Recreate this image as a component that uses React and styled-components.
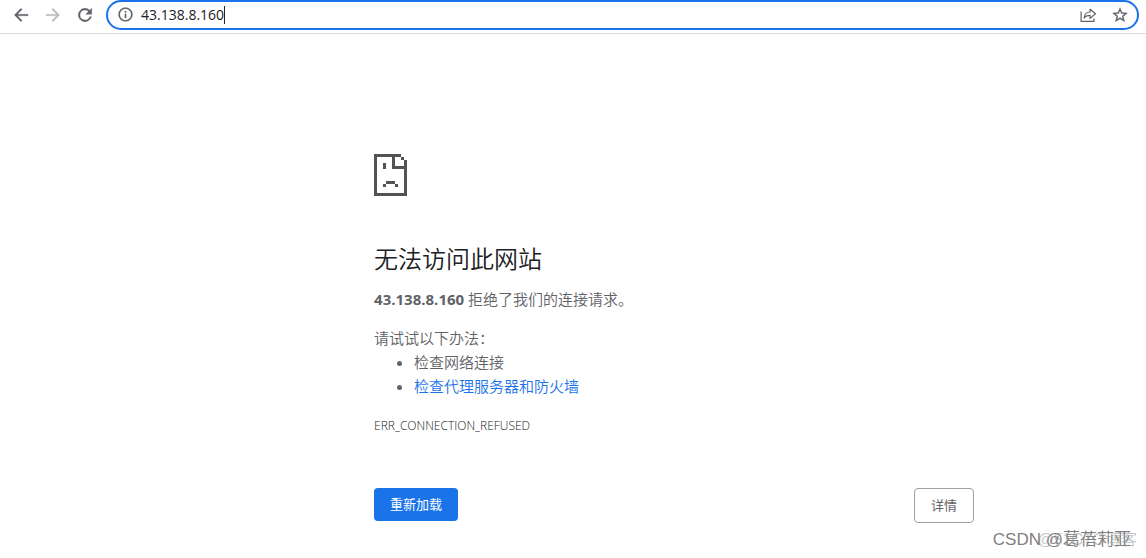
import React from 'react';
import styled, { createGlobalStyle } from 'styled-components';

const GlobalStyle = createGlobalStyle`
  * {
    box-sizing: border-box;
  }
  body {
    margin: 0;
    background: #fff;
    color: #5f6368;
    font-family: 'Open Sans', 'Noto Sans CJK SC', sans-serif;
    font-size: 15px;
    font-weight: 350;
    line-height: 24px;
  }
`
const Page = styled.div`
  position: relative;
  display: flex;
  flex-direction: column;
  min-height: 100vh;
`
const Toolbar = styled.header`
  display: flex;
  align-items: center;
  gap: 8px;
  height: 34px;
  padding: 0 7px 4px 9px;
  border-bottom: 1px solid #dadce0;
`
const IconButton = styled.button`
  display: flex;
  align-items: center;
  justify-content: center;
  width: 24px;
  height: 24px;
  padding: 0;
  border: 0;
  background: none;
  color: ${props => (props.disabled ? '#babcbe' : '#5f6368')};
`
const AddressBar = styled.div`
  display: flex;
  flex: 1;
  align-items: center;
  gap: 8px;
  height: 30px;
  margin-left: 1px;
  padding: 0 5px;
  border: 2px solid #1a73e8;
  border-radius: 15px;
`
const Field = styled.div`
  display: flex;
  flex: 1;
  align-items: center;
`
const AddressInput = styled.input`
  field-sizing: content;
  margin-left: 4px;
  padding: 0;
  border: 0;
  outline: 0;
  background: none;
  color: #202124;
  font-family: inherit;
  font-size: 14px;
  line-height: 20px;
`
const Caret = styled.span`
  width: 1px;
  height: 18px;
  background: #202124;
`
const Content = styled.main`
  width: 100%;
  max-width: 600px;
  margin: 0 15% 0 auto;
  padding-top: 120px;
`
const ErrorIcon = styled.svg`
  display: block;
  width: 33px;
  height: 42px;
  margin-bottom: 48px;
`
const Title = styled.h1`
  margin: 0 0 13px;
  color: #202124;
  font-size: 24px;
  font-weight: 350;
  line-height: 30px;
`
const Text = styled.p`
  margin: 0 0 ${props => (props.$tight ? '0' : '15px')};
`
const Host = styled.strong`
  font-weight: 700;
`
const Tips = styled.ul`
  margin: 0 0 16px;
  padding-left: 40px;
`
const Link = styled.a`
  color: #1a73e8;
  text-decoration: none;
`
const ErrorCode = styled.div`
  color: #202124;
  font-size: 12px;
  font-weight: 300;
`
const Actions = styled.div`
  display: flex;
  align-items: flex-start;
  justify-content: space-between;
  margin-top: 50px;
`
const Button = styled.button`
  padding: 0 16px;
  border: ${props => (props.$primary ? '0' : '1px solid #9aa0a6')};
  border-radius: 4px;
  background: ${props => (props.$primary ? '#1a73e8' : '#fff')};
  color: ${props => (props.$primary ? '#fff' : '#5f6368')};
  font-family: inherit;
  font-size: 13px;
  line-height: 33px;
`
const Watermark = styled.div`
  position: absolute;
  right: ${props => props.$right}px;
  bottom: 6px;
  color: ${props => props.$color};
  font-family: 'Liberation Sans', 'Noto Sans CJK SC', sans-serif;
  font-size: ${props => props.$size}px;
  white-space: nowrap;
`

function Icon({ children, size = 20 }) {
  return (
    <svg width={size} height={size} viewBox="0 0 24 24" fill="currentColor" aria-hidden="true">
      {children}
    </svg>
  )
}

function BrowserBar() {
  return (
    <Toolbar>
      <IconButton aria-label="后退">
        <Icon><path d="M20.5 11H7.8l5.6-5.6L12 4l-8 8 8 8 1.4-1.4L7.8 13h12.7z" stroke="currentColor" strokeWidth=".3" /></Icon>
      </IconButton>
      <IconButton aria-label="前进" disabled>
        <Icon><path d="M3.5 11h12.7l-5.6-5.6L12 4l8 8-8 8-1.4-1.4 5.6-5.6H3.5z" stroke="currentColor" strokeWidth=".3" /></Icon>
      </IconButton>
      <IconButton aria-label="重新加载">
        <Icon><path d="M17.65 6.35A8 8 0 1 0 19.73 14h-2.08A6 6 0 1 1 12 6c1.66 0 3.14.69 4.22 1.78L13 11h7V4z" stroke="currentColor" strokeWidth=".5" /></Icon>
      </IconButton>
      <AddressBar>
        <Field>
          <IconButton aria-label="网站信息">
            <Icon size={17}><path d="M11 7h2v2h-2zm0 4h2v6h-2zm1-9a10 10 0 1 0 0 20 10 10 0 0 0 0-20zm0 18a8 8 0 1 1 0-16 8 8 0 0 1 0 16z" stroke="currentColor" strokeWidth=".3" /></Icon>
          </IconButton>
          <AddressInput aria-label="地址栏" defaultValue="43.138.8.160" />
          <Caret />
        </Field>
        <IconButton aria-label="分享">
          <svg width="18" height="18" viewBox="0 0 18 18" fill="none" stroke="currentColor" strokeWidth="1.2" aria-hidden="true">
            <path d="M2.1 5.5v9.9h12.8v-3" />
            <path d="M5.1 12c.5-4 2.6-6 6-6V3.2l5.4 4.6-5.4 4.6V9.4c-2.6 0-4.4.6-6 2.6z" strokeLinejoin="round" />
          </svg>
        </IconButton>
        <IconButton aria-label="为此标签页添加书签">
          <Icon size={18}><path d="M22 9.24l-7.19-.62L12 2 9.19 8.63 2 9.24l5.46 4.73L5.82 21 12 17.27 18.18 21l-1.63-7.03zM12 15.4l-3.76 2.27 1-4.28-3.32-2.88 4.38-.38L12 6.1l1.71 4.04 4.38.38-3.32 2.88 1 4.28z" stroke="currentColor" strokeWidth=".4" /></Icon>
        </IconButton>
      </AddressBar>
    </Toolbar>
  )
}

function SadPage() {
  return (
    <ErrorIcon viewBox="0 0 11 14" fill="#535353" shapeRendering="crispEdges" aria-hidden="true">
      <path d="M0 0h9v1H7v3h4v10H0zM1 1v12h9V5H6V1z" fillRule="evenodd" />
      <path d="M9 1h1v1H9zM10 2h1v3h-1zM3 3h1v2H3zM4 9h3v1H4zM3 10h1v1H3zM7 10h1v1H7z" />
    </ErrorIcon>
  )
}

export default function App() {
  return (
    <>
      <GlobalStyle />
      <Page>
        <BrowserBar />
        <Content>
          <SadPage />
          <Title>无法访问此网站</Title>
          <Text><Host>43.138.8.160</Host> 拒绝了我们的连接请求。</Text>
          <Text $tight>请试试以下办法：</Text>
          <Tips>
            <li>检查网络连接</li>
            <li><Link href="#proxy">检查代理服务器和防火墙</Link></li>
          </Tips>
          <ErrorCode>ERR_CONNECTION_REFUSED</ErrorCode>
          <Actions>
            <Button $primary>重新加载</Button>
            <Button>详情</Button>
          </Actions>
        </Content>
        <Watermark $right={9} $size={16} $color="#c8c8c8">@51CTO博客</Watermark>
        <Watermark $right={15} $size={17} $color="#808080">CSDN @葛蓓莉亚</Watermark>
      </Page>
    </>
  )
}
